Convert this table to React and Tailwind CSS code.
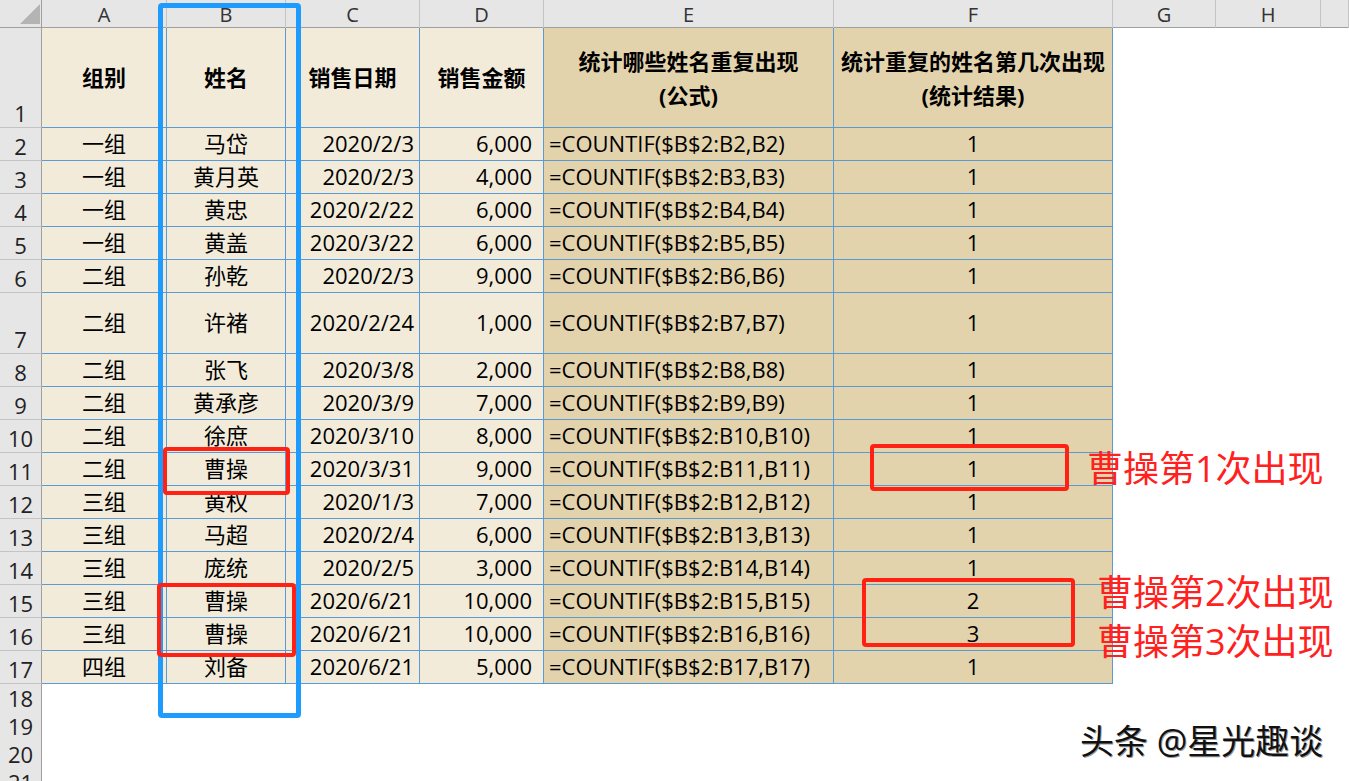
import React from 'react';

const COLS = 'grid grid-cols-[42px_125px_119px_134px_124px_290px_279px_103px_105px_1fr]';

const rows = [
  [2, 'h-[33px]', '一组', '马岱', '2020/2/3', '6,000', 'B2', '1'],
  [3, 'h-[33px]', '一组', '黄月英', '2020/2/3', '4,000', 'B3', '1'],
  [4, 'h-[33px]', '一组', '黄忠', '2020/2/22', '6,000', 'B4', '1'],
  [5, 'h-[33px]', '一组', '黄盖', '2020/3/22', '6,000', 'B5', '1'],
  [6, 'h-[33px]', '二组', '孙乾', '2020/2/3', '9,000', 'B6', '1'],
  [7, 'h-[61px]', '二组', '许褚', '2020/2/24', '1,000', 'B7', '1'],
  [8, 'h-[33px]', '二组', '张飞', '2020/3/8', '2,000', 'B8', '1'],
  [9, 'h-[33px]', '二组', '黄承彦', '2020/3/9', '7,000', 'B9', '1'],
  [10, 'h-[33px]', '二组', '徐庶', '2020/3/10', '8,000', 'B10', '1'],
  [11, 'h-[33px]', '二组', '曹操', '2020/3/31', '9,000', 'B11', '1'],
  [12, 'h-[33px]', '三组', '黄权', '2020/1/3', '7,000', 'B12', '1'],
  [13, 'h-[33px]', '三组', '马超', '2020/2/4', '6,000', 'B13', '1'],
  [14, 'h-[33px]', '三组', '庞统', '2020/2/5', '3,000', 'B14', '1'],
  [15, 'h-[33px]', '三组', '曹操', '2020/6/21', '10,000', 'B15', '2'],
  [16, 'h-[33px]', '三组', '曹操', '2020/6/21', '10,000', 'B16', '3'],
  [17, 'h-[33px]', '四组', '刘备', '2020/6/21', '5,000', 'B17', '1'],
];

const cell = 'flex items-center overflow-hidden whitespace-nowrap border-r border-b border-[#5b9bd5] text-[22px] text-black';
const beige = 'bg-[#f2ebda]';
const tan = 'bg-[#e3d3ad]';

function RowNum({ n }) {
  return (
    <div className="flex items-end justify-center border-r border-b border-r-[#a0a0a0] border-b-[#c4c4c4] bg-[#e6e6e6] text-[22px] leading-[28px] text-[#222]">
      {n}
    </div>
  );
}

function Blank() {
  return <div className="bg-white" />;
}

export default function App() {
  return (
    <div className="relative w-[1349px] h-[781px] overflow-hidden bg-white font-['Open_Sans','Noto_Sans_CJK_SC',sans-serif]">
      {/* column letters */}
      <div className={`${COLS} h-[28px] border-b border-[#9f9f9f] bg-[#e6e6e6]`}>
        <div className="relative border-r border-[#a0a0a0]">
          <svg className="absolute left-0 top-0" width="42" height="27">
            <polygon points="20,24 40,24 40,4" fill="#b4b4b4" />
          </svg>
        </div>
        {['A', 'B', 'C', 'D', 'E', 'F', 'G', 'H', ''].map((c, i) => (
          <div key={i} className="flex items-center justify-center border-r border-[#c4c4c4] text-[20px] text-[#333]">
            {c}
          </div>
        ))}
      </div>

      {/* header row 1 */}
      <div className={`${COLS} h-[100px]`}>
        <RowNum n={1} />
        <div className={`${cell} ${beige} justify-center font-bold`}>组别</div>
        <div className={`${cell} ${beige} justify-center font-bold`}>姓名</div>
        <div className={`${cell} ${beige} justify-center font-bold`}>销售日期</div>
        <div className={`${cell} ${beige} justify-center font-bold`}>销售金额</div>
        <div className={`${cell} ${tan} flex-col justify-center font-bold leading-[34px] text-center`}>
          <span>统计哪些姓名重复出现</span>
          <span>(公式)</span>
        </div>
        <div className={`${cell} ${tan} flex-col justify-center font-bold leading-[34px] text-center`}>
          <span>统计重复的姓名第几次出现</span>
          <span>(统计结果)</span>
        </div>
        <Blank />
        <Blank />
        <Blank />
      </div>

      {rows.map(([n, h, g, name, date, amt, ref, res]) => (
        <div key={n} className={`${COLS} ${h}`}>
          <RowNum n={n} />
          <div className={`${cell} ${beige} justify-center pb-[2px]`}>{g}</div>
          <div className={`${cell} ${beige} justify-center pb-[2px]`}>{name}</div>
          <div className={`${cell} ${beige} justify-end pr-[5px] pb-[2px] text-[22.5px]`}>{date}</div>
          <div className={`${cell} ${beige} justify-end pr-[11px] pb-[2px]`}>{amt}</div>
          <div className={`${cell} ${tan} pl-[5px] pb-[2px] text-[22.5px]`}>{`=COUNTIF($B$2:${ref},${ref})`}</div>
          <div className={`${cell} ${tan} justify-center pb-[2px]`}>{res}</div>
          <Blank />
          <Blank />
          <Blank />
        </div>
      ))}

      {[18, 19, 20, 21].map((n) => (
        <div key={n} className={`${COLS} h-[28px]`}>
          <RowNum n={n} />
        </div>
      ))}

      {/* highlight boxes */}
      <div className="absolute left-[158px] top-[3px] w-[143px] h-[715px] rounded-[4px] border-[5px] border-[#1e9bff]" />
      <div className="absolute left-[163px] top-[447px] w-[127px] h-[48px] rounded-[4px] border-4 border-[#ff2113]" />
      <div className="absolute left-[870px] top-[444px] w-[199px] h-[47px] rounded-[4px] border-4 border-[#ff2113]" />
      <div className="absolute left-[157px] top-[583px] w-[139px] h-[74px] rounded-[4px] border-4 border-[#ff2113]" />
      <div className="absolute left-[862px] top-[578px] w-[213px] h-[69px] rounded-[4px] border-4 border-[#ff2113]" />

      {/* annotations */}
      <div className="absolute left-[1087px] top-[449px] text-[36px] leading-[40px] text-[#ff2020] whitespace-nowrap">曹操第1次出现</div>
      <div className="absolute left-[1097px] top-[573px] text-[36px] leading-[40px] text-[#ff2020] whitespace-nowrap">曹操第2次出现</div>
      <div className="absolute left-[1097px] top-[622px] text-[36px] leading-[40px] text-[#ff2020] whitespace-nowrap">曹操第3次出现</div>
      <div className="absolute left-[1080px] top-[721px] text-[34px] leading-[40px] text-[#111] whitespace-nowrap [text-shadow:1px_1px_0_#9a9a9a,-1px_-1px_0_#fff]">
        头条 @星光趣谈
      </div>
    </div>
  );
}
